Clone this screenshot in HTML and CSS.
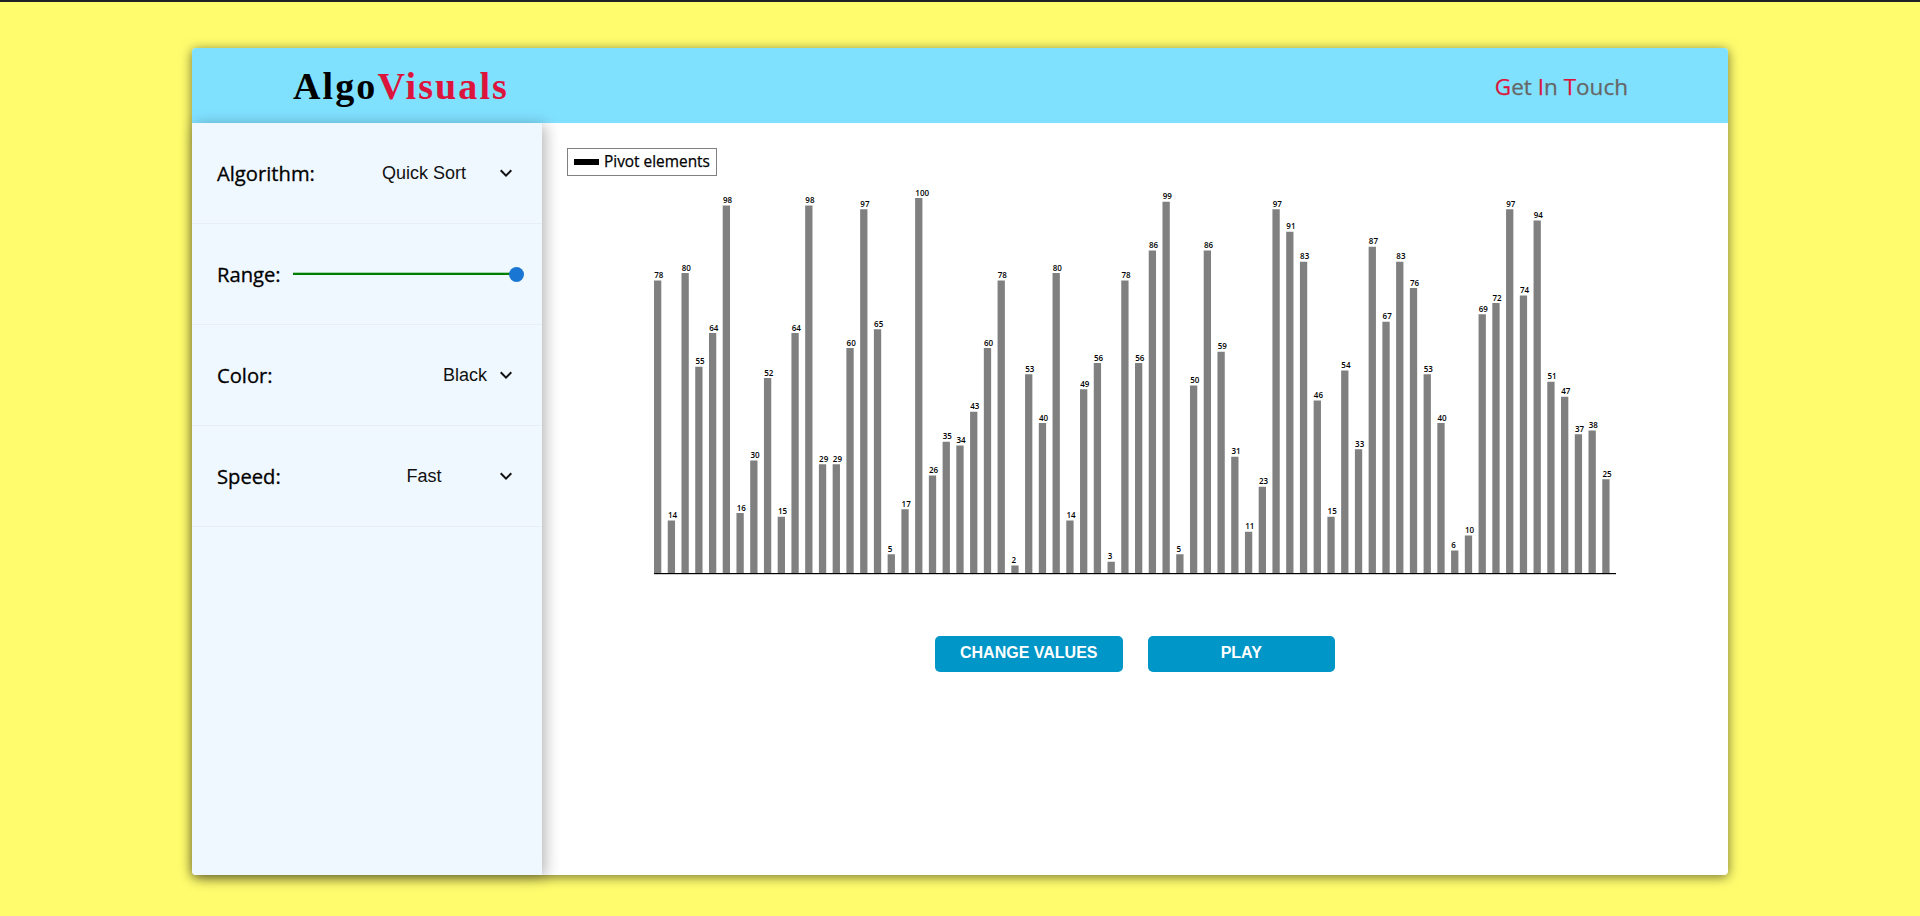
FILE: index.html
```html
<!DOCTYPE html>
<html lang="en">
<head>
  <meta charset="UTF-8" />
  <title>AlgoVisuals</title>
  <link rel="stylesheet" href="styles.css">
</head>
<body>
  <div class="app">
    <header class="topbar">
      <h1 class="logo">Algo<span class="accent">Visuals</span></h1>
      <a class="contact" href="#"><span class="accent">G</span>et <span class="accent">I</span>n <span class="accent">T</span>ouch</a>
    </header>

    <div class="content">
      <aside class="sidebar">
        <div class="row">
          <span class="row-label">Algorithm:</span>
          <div class="select">
            <span class="select-text">Quick Sort</span>
            <svg class="chevron" viewBox="0 0 24 24"><path d="M16.59 8.59L12 13.17 7.41 8.59 6 10l6 6 6-6z"/></svg>
          </div>
        </div>
        <div class="row">
          <span class="row-label">Range:</span>
          <div class="slider">
            <span class="slider-thumb"></span>
          </div>
        </div>
        <div class="row">
          <span class="row-label">Color:</span>
          <div class="select">
            <span class="select-text select-narrow">Black</span>
            <svg class="chevron" viewBox="0 0 24 24"><path d="M16.59 8.59L12 13.17 7.41 8.59 6 10l6 6 6-6z"/></svg>
          </div>
        </div>
        <div class="row">
          <span class="row-label">Speed:</span>
          <div class="select">
            <span class="select-text">Fast</span>
            <svg class="chevron" viewBox="0 0 24 24"><path d="M16.59 8.59L12 13.17 7.41 8.59 6 10l6 6 6-6z"/></svg>
          </div>
        </div>
      </aside>

      <main class="main">
        <div class="legend">
          <span class="legend-swatch"></span>
          <span class="legend-text">Pivot elements</span>
        </div>
        <svg id="chart" class="chart" width="962" height="390" viewBox="0 0 962 390"></svg>
        <div class="actions">
          <button class="btn">CHANGE VALUES</button>
          <button class="btn">PLAY</button>
        </div>
      </main>
    </div>
  </div>

  <script src="chart.js"></script>
</body>
</html>
```

FILE: styles.css
```css
body {
  margin: 0;
  height: 914px;
  overflow: hidden;
  background-color: #fffc6e;
  border-top: 2px solid #202124;
  font-family: "Open Sans", "Noto Sans", sans-serif;
  color: #000;
}

.app {
  width: 1536px;
  height: 827px;
  margin: 46px auto 0;
  display: flex;
  flex-direction: column;
  background: #fff;
  border-radius: 4px;
  box-shadow: 0 2px 12px rgba(0,0,0,0.55);
}

.topbar {
  height: 75px;
  flex-shrink: 0;
  display: flex;
  align-items: center;
  justify-content: space-between;
  padding: 0 100px 0 101px;
  background-color: #80e1ff;
  border-radius: 4px 4px 0 0;
}

.logo {
  margin: 0;
  font-family: "Liberation Serif", serif;
  font-size: 38px;
  font-weight: bold;
  letter-spacing: 2.1px;
}

.accent {
  color: #dc143c;
}

.contact {
  margin-top: 2px;
  font-size: 22.5px;
  -webkit-text-stroke: 0.25px;
  color: #666;
  text-decoration: none;
}

.content {
  flex: 1;
  display: flex;
  min-height: 0;
}

.sidebar {
  position: relative;
  width: 350px;
  flex-shrink: 0;
  background-color: #f0f8ff;
  border-radius: 0 0 0 4px;
  box-shadow: 3px 2px 15px rgba(0,0,0,0.3);
}

.row {
  height: 100px;
  display: flex;
  align-items: center;
  padding: 0 24px 0 25px;
  border-bottom: 1px solid #e8eef3;
}

.row-label {
  font-size: 20.2px;
  -webkit-text-stroke: 0.3px;
}

.select {
  margin-left: auto;
  display: flex;
  align-items: center;
}

.select-text {
  width: 140px;
  text-align: center;
  font-family: "Liberation Sans", sans-serif;
  font-size: 18px;
  color: #111;
}

.select-narrow {
  width: 58px;
}

.chevron {
  width: 24px;
  height: 24px;
  fill: #111;
}

.slider {
  position: relative;
  flex: 1;
  height: 2px;
  margin: 0 1px 0 12px;
  background-color: #008000;
  box-shadow: 0 -1px 0 rgba(0,128,0,0.3);
}

.slider-thumb {
  position: absolute;
  right: -7px;
  top: -6.5px;
  width: 15px;
  height: 15px;
  border-radius: 50%;
  background-color: #1976d2;
}

.main {
  flex: 1;
  display: flex;
  flex-direction: column;
  padding: 25px;
}

.legend {
  align-self: flex-start;
  box-sizing: border-box;
  width: 150px;
  height: 28px;
  display: flex;
  align-items: center;
  gap: 5px;
  padding-left: 6px;
  border: 1px solid #808080;
  font-size: 15.4px;
  -webkit-text-stroke: 0.25px;
}

.legend-text {
  margin-top: -2px;
}

.legend-swatch {
  width: 25px;
  height: 6px;
  background-color: #000;
}

.chart {
  align-self: center;
  margin-top: 10px;
}

.bar {
  fill: #808080;
}

.axis {
  fill: #000;
}

.bar-label {
  font-size: 8px;
  font-weight: 600;
}

.actions {
  display: flex;
  justify-content: center;
  gap: 25px;
  margin-top: 60px;
}

.btn {
  width: 187.5px;
  height: 36px;
  padding: 0 0 3px;
  border: none;
  border-radius: 5px;
  background-color: #0096c7;
  color: #fff;
  font-family: "Liberation Sans", sans-serif;
  font-size: 16px;
  font-weight: bold;
  cursor: pointer;
}
```

FILE: chart.js
```js
const values = [78, 14, 80, 55, 64, 98, 16, 30, 52, 15, 64, 98, 29, 29, 60, 97, 65, 5, 17, 100,
  26, 35, 34, 43, 60, 78, 2, 53, 40, 80, 14, 49, 56, 3, 78, 56, 86, 99, 5, 50,
  86, 59, 31, 11, 23, 97, 91, 83, 46, 15, 54, 33, 87, 67, 83, 76, 53, 40, 6, 10,
  69, 72, 97, 74, 94, 51, 47, 37, 38, 25];

const chart = document.getElementById("chart");
const NS = "http://www.w3.org/2000/svg";
const band = 962 / values.length;
const baseY = 387;

function add(tag, attrs, text) {
  const el = document.createElementNS(NS, tag);
  for (const key in attrs) el.setAttribute(key, attrs[key]);
  if (text !== undefined) el.textContent = text;
  chart.appendChild(el);
}

values.forEach(function (v, i) {
  const x = i * band;
  const h = v * 3.75;
  add("rect", { class: "bar", x: x, y: baseY - h, width: 7.3, height: h });
  add("text", { class: "bar-label", x: x + 0.2, y: baseY - h - 2.5 }, v);
});

add("rect", { class: "axis", x: 0, y: baseY, width: 962, height: 1.2 });
```
